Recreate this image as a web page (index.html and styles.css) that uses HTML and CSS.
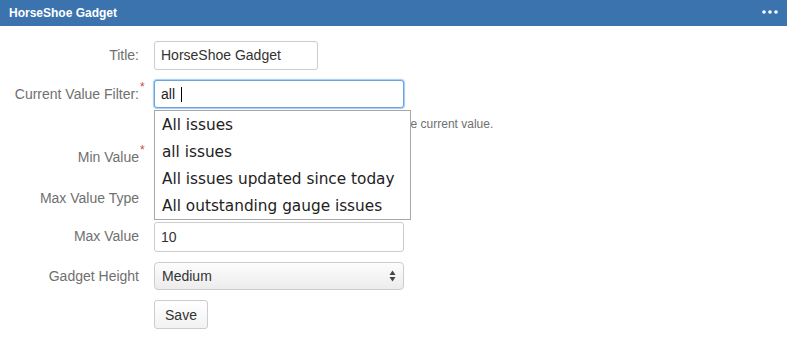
FILE: index.html
```html
<!DOCTYPE html>
<html>
<head>
<meta charset="utf-8">
<link rel="stylesheet" href="styles.css">
</head>
<body>
<div class="gadget">
  <div class="header">
    <span class="header-title">HorseShoe Gadget</span>
    <svg class="menu" width="16" height="4" viewBox="0 0 16 4"><circle cx="2" cy="2" r="1.8" fill="#fff"/><circle cx="8" cy="2" r="1.8" fill="#fff"/><circle cx="14" cy="2" r="1.8" fill="#fff"/></svg>
  </div>
  <form class="form">
    <div class="group">
      <label class="label">Title:</label>
      <div class="field"><div class="input w-short">HorseShoe Gadget</div></div>
    </div>
    <div class="group">
      <label class="label">Current Value Filter:<span class="req">*</span></label>
      <div class="field">
        <div class="input w-long focus">all<span class="caret"></span></div>
        <div class="help"><span class="help-lead">The saved filter or JQL query used to calculate th</span>e current value.</div>
        <ul class="suggest">
          <li>All issues</li>
          <li>all issues</li>
          <li>All issues updated since today</li>
          <li>All outstanding gauge issues</li>
        </ul>
      </div>
    </div>
    <div class="group">
      <label class="label">Min Value<span class="req">*</span></label>
      <div class="field"><div class="input w-long h31">0</div></div>
    </div>
    <div class="group">
      <label class="label">Max Value Type</label>
      <div class="field"><div class="input w-long select">Fixed</div></div>
    </div>
    <div class="group">
      <label class="label">Max Value</label>
      <div class="field"><div class="input w-long h30">10</div></div>
    </div>
    <div class="group">
      <label class="label">Gadget Height</label>
      <div class="field">
        <div class="input w-long select">Medium
          <svg class="arrows" width="7" height="12" viewBox="0 0 7 12"><path d="M3.5 0.5 L6.5 5 L0.5 5 Z" fill="#444"/><path d="M0.5 7 L6.5 7 L3.5 11.5 Z" fill="#444"/></svg>
        </div>
      </div>
    </div>
    <div class="group">
      <span class="label"></span>
      <div class="field"><button type="button" class="btn">Save</button></div>
    </div>
  </form>
</div>
</body>
</html>
```
FILE: styles.css
```css
html, body {
  margin: 0;
  padding: 0;
  background: #fff;
}
body {
  font-family: "Liberation Sans", Arial, sans-serif;
  font-size: 14px;
  color: #333;
}
.header {
  height: 26px;
  background: #3b73af;
  display: flex;
  align-items: center;
  justify-content: space-between;
  padding: 0 9px 0 9px;
}
.header-title {
  color: #fff;
  font-weight: bold;
  font-size: 12px;
}
.menu {
  display: block;
  margin-top: -2px;
}
.form {
  display: flex;
  flex-direction: column;
  gap: 10px;
  padding-top: 15px;
}
.group {
  display: grid;
  grid-template-columns: 139px 1fr;
  column-gap: 15px;
  align-items: start;
}
.label {
  text-align: right;
  color: #707070;
  font-size: 14px;
  line-height: 29px;
  height: 28px;
  position: relative;
  white-space: nowrap;
}
.req {
  position: absolute;
  left: 100%;
  top: -7px;
  margin-left: 1px;
  color: #d04437;
  font-size: 12px;
}
.field {
  position: relative;
}
.input {
  box-sizing: border-box;
  height: 29px;
  border: 1px solid #ccc;
  border-radius: 3px;
  background: #fff;
  padding: 0 6px;
  line-height: 27px;
  font-size: 14px;
  color: #333;
  display: flex;
  align-items: center;
}
.h30 { height: 30px; }
.h31 { height: 31px; }
.w-short { width: 164px; }
.w-long { width: 250px; }
.focus {
  height: 28px;
  border-color: #6aa3e0;
  box-shadow: 0 0 1px 1px rgba(90, 160, 240, 0.55);
  color: #222;
}
.caret {
  display: inline-block;
  width: 1px;
  height: 15px;
  background: #000;
  margin-left: 6px;
}
.help {
  margin-top: 8px;
  line-height: 16px;
  height: 17px;
  font-size: 12px;
  color: #707070;
  white-space: nowrap;
}
.help-lead {
  letter-spacing: -0.09px;
}
.select {
  height: 28px;
  border-radius: 4px;
  background: linear-gradient(#fdfdfd, #ececec);
  justify-content: space-between;
  padding: 0 7px 0 7px;
}
.arrows {
  display: block;
}
.suggest {
  position: absolute;
  top: 30px;
  left: 0;
  width: 257px;
  box-sizing: border-box;
  margin: 0;
  padding: 1px 0 0 0;
  list-style: none;
  background: #fff;
  border: 1px solid #a8a8a8;
  z-index: 5;
  font-family: "DejaVu Sans", Verdana, sans-serif;
  font-size: 15.3px;
  color: #222;
}
.suggest li {
  height: 27px;
  line-height: 27px;
  padding-left: 7px;
  white-space: nowrap;
}
.suggest li:last-child {
  height: 26px;
}
.btn {
  box-sizing: border-box;
  width: 54px;
  height: 29px;
  border: 1px solid #ccc;
  border-radius: 3px;
  background: linear-gradient(#fff, #f2f2f2);
  font-family: "Liberation Sans", Arial, sans-serif;
  font-size: 14px;
  color: #333;
  padding: 0;
}
```
